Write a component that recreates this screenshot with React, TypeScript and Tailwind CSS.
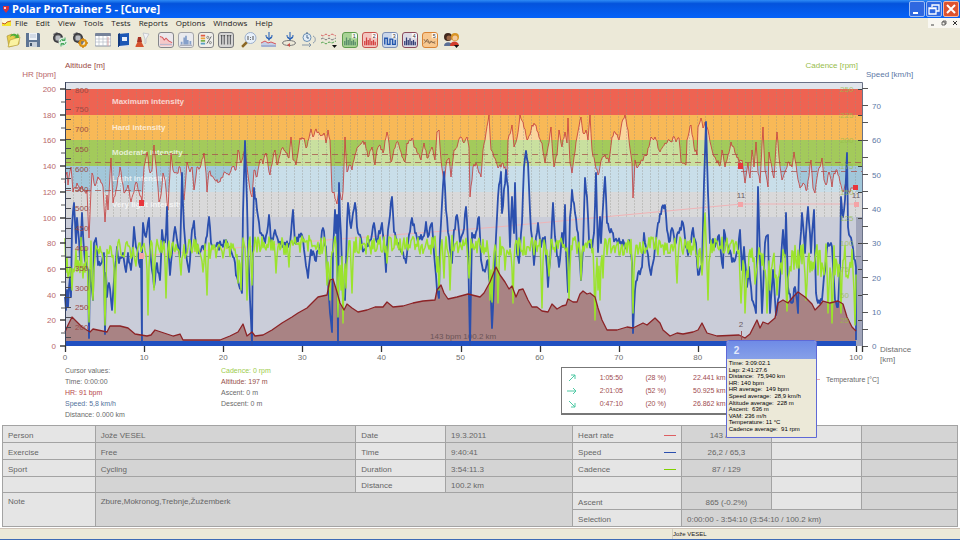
import type { ReactNode } from 'react'
import { clsx } from 'clsx'

type Point = [number, number]

const MENU = ['File', 'Edit', 'View', 'Tools', 'Tests', 'Reports', 'Options', 'Windows', 'Help']

// Recorded curves, as x y pairs in chart units
const HEART_RATE =
  '65 183 67 172 68 185 71 167 73 192 75 188 77 183 80 190 82 186 85 192 87 190 89 238 91 190 92 173 95 186 98 177 101 183 103 187 105 222 107 195 108 210 111 158 113 203 115 196 117 186 120 167 124 193 126 190 128 185 131 202 134 192 136 182 139 192 142 202 144 167 147 152 150 173 152 170 154 145 157 177 159 202 161 195 163 173 165 180 167 202 168 210 171 153 173 170 177 173 180 167 182 180 184 200 187 162 190 172 192 167 194 190 197 167 200 168 204 153 206 173 207 192 209 172 213 177 220 182 225 172 230 173 233 167 236 170 238 150 241 163 243 157 245 150 247 167 250 190 252 197 254 170 257 177 260 160 263 164 266 153 268 165 270 175 273 158 275 150 277 165 280 155 282 148 287 153 289 158 291 137 293 160 296 165 298 153 300 138 304 138 306 148 309 138 311 129 313 137 315 131 318 132 321 136 324 133 326 143 328 130 330 140 332 192 334 192 337 204 339 190 342 200 343 192 345 137 347 172 350 165 352 170 355 155 358 147 361 144 365 142 368 157 372 147 375 165 377 150 380 145 383 153 387 132 389 143 391 162 395 148 398 142 402 157 405 162 407 143 412 138 415 148 421 160 424 143 427 158 432 147 435 160 437 132 439 130 441 160 443 175 444 182 447 160 449 158 451 177 454 150 458 143 461 137 463 142 467 137 469 147 470 197 472 180 473 167 477 165 479 173 481 177 483 150 486 133 489 115 491 150 495 158 498 168 503 163 507 175 508 140 512 125 514 147 517 138 520 115 523 122 527 140 530 135 532 125 535 125 538 132 542 143 545 163 548 147 551 127 553 157 554 167 557 155 559 130 562 147 565 132 567 143 568 118 570 163 572 173 575 152 577 137 581 117 583 133 586 130 588 140 590 115 592 150 595 163 598 175 602 158 605 155 609 162 612 137 615 132 619 140 622 122 625 115 628 130 632 163 633 198 635 160 637 168 642 160 647 155 651 137 655 137 660 152 665 143 668 140 672 142 673 137 676 142 679 138 681 162 686 165 687 140 691 125 694 147 697 155 698 127 701 118 703 128 705 122 708 130 712 150 715 157 720 166 722 150 725 167 728 155 731 142 735 153 739 162 742 160 745 183 748 163 750 178 752 150 754 167 756 142 758 173 760 183 763 127 765 170 768 187 769 152 772 168 774 178 777 132 779 157 782 180 785 172 789 162 792 167 794 152 797 173 800 188 803 183 807 190 811 160 813 188 815 193 818 172 822 158 824 180 826 185 829 172 832 187 834 173 837 170 840 182 843 192 846 182 849 192 853 188 856 188'

const SPEED =
  '65 297 66 310 67 290 68 307 70 277 71 297 72 227 74 203 76 243 77 218 79 240 80 260 82 213 84 250 86 263 88 270 89 338 90 270 92 290 93 300 94 243 96 238 98 265 102 262 104 253 105 334 106 273 107 297 109 283 111 300 112 310 114 280 117 247 119 263 123 253 126 272 128 253 131 270 134 227 136 247 140 267 141 255 142 345 142 253 143 223 146 237 149 218 150 247 152 270 154 287 157 263 160 280 162 230 164 243 166 233 167 207 168 250 170 275 172 253 175 227 177 240 180 257 182 173 184 227 186 253 189 272 192 230 194 221 196 243 200 253 205 247 209 217 211 243 215 247 222 245 226 240 230 247 233 257 237 277 242 293 243 213 245 141 247 203 248 247 250 300 251 320 252 345 253 230 254 188 257 210 260 233 265 243 269 215 271 243 275 230 278 240 283 247 290 243 293 210 295 243 302 235 305 257 308 278 311 250 315 260 320 247 323 228 326 247 327 273 330 313 332 332 333 250 335 210 336 233 337 215 338 344 339 183 340 217 341 235 343 300 345 300 347 223 348 203 351 228 355 203 358 233 364 250 370 240 374 223 377 242 382 223 384 242 386 272 388 230 392 197 394 232 398 243 402 253 406 263 408 243 412 218 415 233 418 242 423 237 426 222 428 237 432 223 434 253 437 290 439 298 440 240 444 172 446 210 449 237 452 263 454 230 457 215 460 243 463 233 466 207 468 243 470 345 472 233 475 238 479 217 481 260 484 270 488 260 491 300 492 328 494 283 497 217 498 197 501 172 502 213 506 170 508 187 510 247 512 197 514 233 515 183 517 253 519 263 522 223 524 167 526 151 528 163 531 230 534 265 536 237 538 223 541 247 545 237 548 287 551 247 553 203 555 237 559 267 562 233 563 247 565 205 566 250 568 292 570 217 572 190 575 213 578 233 581 280 583 247 585 178 587 197 589 240 592 250 594 233 596 173 598 252 600 217 601 243 603 207 605 177 607 223 612 232 615 240 620 243 627 245 629 240 632 263 633 333 635 290 638 273 642 267 644 233 647 250 651 275 655 247 658 223 662 207 665 205 667 230 669 242 672 228 675 245 679 233 683 223 686 247 688 255 693 228 696 243 698 275 702 267 704 183 706 122 708 193 710 243 717 243 719 235 723 268 724 230 728 247 732 262 738 253 740 230 742 270 744 247 747 287 749 267 752 300 756 313 758 187 760 257 762 313 765 243 768 235 770 313 773 270 776 315 779 297 783 230 785 257 786 213 788 287 792 303 795 287 798 313 799 267 802 213 805 253 808 207 811 253 814 210 816 293 818 303 822 300 825 270 828 243 832 247 835 300 838 307 840 267 841 197 843 217 845 200 847 153 848 227 852 243 856 267 856 340'

const ALTITUDE =
  '65 332 68 325 72 317 77 322 82 327 90 332 93 329 107 332 110 326 120 326 128 328 135 334 147 336 151 335 155 330 167 334 173 336 180 334 183 340 220 340 230 336 238 332 243 324 247 336 252 332 255 336 263 335 272 330 282 323 292 317 298 313 307 308 312 303 318 297 327 295 330 280 333 279 337 292 340 303 344 310 347 304 352 308 358 312 367 310 375 307 383 307 387 302 393 307 403 306 413 303 423 301 435 300 437 290 441 285 444 293 448 299 457 297 468 294 480 297 484 293 490 282 496 267 500 275 505 282 509 289 512 286 516 297 519 290 523 289 528 300 532 307 537 307 542 311 548 312 552 304 557 309 562 306 566 305 568 299 573 302 577 302 580 294 583 291 587 294 590 293 595 297 598 308 602 320 607 330 617 330 627 327 633 328 643 323 647 325 655 318 660 323 663 330 670 336 677 333 683 334 693 332 698 330 702 323 707 333 717 336 739 335 745 338 750 334 757 320 760 328 763 322 768 324 775 318 778 303 783 300 788 303 793 297 798 292 805 297 812 304 815 310 820 305 823 301 830 303 838 301 843 304 847 317 852 327 856 331'

// Stops in pedalling (and the one sprint), laid over the steady cadence
const CADENCE_DIPS: Point[] = [
  [68, 278], [72, 290], [83, 278], [89, 322], [93, 300], [105, 325], [115, 313], [136, 266], [148, 315], [154, 290], [166, 298],
  [181, 275], [203, 272], [207, 295], [238, 283], [241, 290], [247, 300], [252, 285], [276, 273], [289, 267], [327, 285],
  [330, 300], [338, 317], [341, 290], [343, 323], [346, 288], [352, 293], [387, 263], [437, 272], [439, 290], [444, 278],
  [450, 290], [469, 278], [490, 300], [492, 302], [498, 303], [505, 270], [513, 303], [542, 308], [549, 276], [569, 300],
  [581, 280], [595, 320], [598, 290], [600, 300], [603, 278], [633, 313], [677, 283], [698, 268], [702, 275], [705, 213],
  [708, 300], [741, 303], [745, 313], [755, 284], [767, 313], [770, 290], [777, 295], [787, 311], [806, 300], [828, 313],
  [832, 323], [841, 313], [848, 278], [855, 325],
]

const BANDS = [
  { y: 82, h: 7, color: '#e0e4eb', label: '' },
  { y: 89, h: 26, color: '#ee6352', label: 'Maximum intensity' },
  { y: 115, h: 25, color: '#f8b957', label: 'Hard intensity' },
  { y: 140, h: 26, color: '#a3ca5b', label: 'Moderate intensity' },
  { y: 166, h: 26, color: '#a2c7da', label: 'Light intensity' },
  { y: 192, h: 25, color: '#d9d9da', label: 'Very light intensity' },
  { y: 217, h: 124, color: '#cacdd9', label: '' },
]

const parse = (data: string): Point[] => {
  const n = data.split(' ').map(Number)
  return Array.from({ length: n.length / 2 }, (_, i) => [n[i * 2], n[i * 2 + 1]] as Point)
}

const toPath = (points: Point[]) => 'M' + points.map(([x, y]) => `${x} ${y.toFixed(1)}`).join('L')

const random = (seed: number) => () => {
  seed = (seed * 16807) % 2147483647
  return seed / 2147483647 - 0.5
}

// Sensor noise between the recorded points
const roughen = (points: Point[], amount: number, seed: number): Point[] => {
  const next = random(seed)
  return points.flatMap(([x, y], i) => {
    const following = points[i + 1]
    if (!following || following[0] - x < 2) return [[x, y] as Point]
    const steps = Math.floor(following[0] - x)
    return Array.from({ length: steps }, (_, s) => {
      const t = s / steps
      const noise = s === 0 ? 0 : next() * amount
      return [x + s, y + (following[1] - y) * t + noise] as Point
    })
  })
}

const cadencePoints = (): Point[] => {
  const next = random(4242)
  const points: Point[] = []
  for (let x = 65; x <= 856; x++) {
    const dip = CADENCE_DIPS.find((d) => d[0] === x)
    const nearby = CADENCE_DIPS.find((d) => Math.abs(d[0] - x) === 1)
    const base = x < 100 ? 255 : x < 240 ? 249 : x < 500 ? 245 : x < 740 ? 246 : 261
    const spread = x < 100 || x > 740 ? 36 : 19
    let y = base + next() * spread
    if (nearby) y += (nearby[1] - y) * 0.35
    points.push([x, dip ? dip[1] : y])
  }
  return points
}

const hr = roughen(parse(HEART_RATE), 5, 77)
const speed = roughen(parse(SPEED), 9, 191)
const altitude = parse(ALTITUDE)
const cadence = cadencePoints()

const range = (count: number) => Array.from({ length: count }, (_, i) => i)

function CurveChart() {
  return (
    <svg viewBox="0 50 960 315" className="block w-full font-['Liberation_Sans',sans-serif] text-[8px]" role="img" aria-label="Exercise curve">
      {BANDS.slice(0, 5).map((b) => (
        <rect key={b.y} x="65" y={b.y} width="797" height={b.h} fill={b.color} />
      ))}
      <path d={`${toPath(hr)}V200H65Z`} fill="#fff" opacity=".42" />
      {BANDS.slice(5).map((b) => (
        <rect key={b.y} x="65" y={b.y} width="797" height={b.h} fill={b.color} />
      ))}
      <rect x="856" y="217" width="6" height="129" fill="#a1a5ba" />
      {range(100).map((i) => (
        <path key={i} d={`M${Math.round(73 + i * 7.9)}.5 89V217`} stroke="#8f8f88" strokeDasharray="2 1" opacity=".34" />
      ))}

      <g fill="#fff" fontWeight="bold">
        {BANDS.filter((b) => b.label).map((b) => (
          <text key={b.y} x="112" y={b.y + 15} opacity=".72">{b.label}</text>
        ))}
      </g>

      {/* altitude area */}
      <path d={`${toPath(altitude)}V342H65Z`} fill="#a98384" />
      <text x="430" y="339" fill="#6b5557">143 bpm 100.2 km</text>

      {/* averages */}
      <g strokeDasharray="6 4" opacity=".75">
        <path d="M65 190.5H142M142 154.5H741M65 162.5H862M741 171.5H862" stroke="#a8504a" />
        <path d="M65 256.5H862" stroke="#66758a" />
      </g>
      <path d="M142 256L327 240L497 227L741 204H856" fill="none" stroke="#efb3b6" />

      <rect x="65" y="341" width="791" height="5" fill="#2150c0" />
      <path d={toPath(hr)} fill="none" stroke="#c53c3a" strokeWidth=".9" opacity=".9" />
      <path d={toPath(speed)} fill="none" stroke="#2b4fae" strokeWidth="1.8" strokeLinejoin="round" />
      <path d={toPath(cadence)} fill="none" stroke="#9be32c" strokeWidth="1.5" strokeLinejoin="round" />
      <path d={toPath(altitude)} fill="none" stroke="#8c2326" strokeWidth="1.3" strokeLinejoin="round" />

      <path d="M139 200h5v6h-5zM738 163h5v6h-5zM853 185h5v5h-5z" fill="#e8363c" />
      <path d="M139 253h5v6h-5zM738 202h5v5h-5zM854 202h5v5h-5z" fill="#f5a3a6" />
      <g fill="#6a5a62" textAnchor="middle">
        <text x="741" y="198">11</text>
        <text x="856" y="198">11</text>
        <text x="741" y="327">2</text>
      </g>
      <path d="M741.5 331v10" stroke="#a05055" />

      <path d="M65 82.5H862.5V346" fill="none" stroke="#6a7287" />
      <path d="M65.5 82V346" stroke="#39435c" />

      {/* heart rate axis */}
      <g textAnchor="end" fill="#b9686b">
        <text x="56" y="77">HR [bpm]</text>
        {range(11).map((i) => (
          <text key={i} x="56" y={92 + i * 25.7}>{200 - i * 20}</text>
        ))}
      </g>
      {range(11).map((i) => (
        <path key={i} d={`M60 ${Math.round(89 + i * 25.7)}h6`} stroke="#333" strokeWidth="1.4" />
      ))}
      {range(10).map((i) => (
        <path key={i} d={`M61 ${Math.round(102 + i * 25.7)}h4`} stroke="#555" />
      ))}

      {/* altitude axis */}
      <g fill="#9a4a44">
        <text x="65" y="68">Altitude [m]</text>
        {range(13).map((i) => (
          <text key={i} x="75" y={92.5 + i * 19.8}>{800 - i * 50}</text>
        ))}
      </g>
      {range(26).map((i) => (
        <path key={i} d={`M66 ${Math.round(89 + i * 9.9)}.5h5`} stroke="#4a4a50" />
      ))}

      {/* cadence axis */}
      <g fill="#98bd4a">
        <text x="858" y="68" textAnchor="end">Cadence [rpm]</text>
        {range(10).map((i) => (
          <text key={i} x="840" y={92 + i * 25.7} opacity=".75">{250 - i * 25}</text>
        ))}
      </g>
      {range(10).map((i) => (
        <path key={i} d={`M858 ${Math.round(89 + i * 25.7)}.5h4`} stroke="#444" />
      ))}

      {/* speed axis */}
      <g fill="#5c77a5">
        <text x="866" y="77">Speed [km/h]</text>
        {range(8).map((i) => (
          <text key={i} x="872" y={109 + i * 34.3}>{70 - i * 10}</text>
        ))}
      </g>
      {range(16).map((i) => (
        <path key={i} d={`M862 ${Math.round(88 + i * 17.2)}.5h6`} stroke="#555" />
      ))}

      {/* distance axis */}
      <g fill="#6f6f6f">
        {range(11).map((i) => (
          <text key={i} x={65 + i * 79.1} y="360" textAnchor="middle">{i * 10}</text>
        ))}
        <text x="880" y="352">Distance</text>
        <text x="880" y="362">[km]</text>
      </g>
      {range(11).map((i) => (
        <path key={i} d={`M${Math.round(65 + i * 79.1)}.5 346v6`} stroke="#333" strokeWidth="1.3" />
      ))}
      <path d="M862.5 346v6" stroke="#333" strokeWidth="1.3" />
    </svg>
  )
}

function Tool({ label, frame, children }: { label: string; frame?: string; children: ReactNode }) {
  return (
    <button type="button" aria-label={label} className={clsx('size-4 shrink-0 overflow-hidden rounded-[3px]', frame)}>
      <svg viewBox="0 0 16 16" className="block size-full" fill="none">{children}</svg>
    </button>
  )
}

function Watch({ children }: { children: ReactNode }) {
  return (
    <>
      <path d="M1 2l4-2 8 8-3 5-3-1z" fill="#77777b" />
      <circle cx="6" cy="6" r="5" fill="#3b3b3f" />
      <circle cx="6" cy="6" r="3" fill="#b9bcc2" stroke="#77797d" />
      {children}
    </>
  )
}

function NumberedTool({ n, frame, color }: { n: number; frame: string; color: string }) {
  return (
    <Tool label={`View ${n}`} frame={frame}>
      {n === 5 ? (
        <path d="M1 7l2 3 2-3 2 4 2-2 2 2 3-1M1 12l3-3 3 3 3-2 4 2" stroke={color} />
      ) : n === 3 ? (
        <path d="M2 13V6h3v7h3V7h3v6h3V8" stroke={color} strokeWidth="1.6" />
      ) : (
        <path d="M2 14V9M4 14V5M6 14V8M8 14V6M10 14V9M12 14V8M14 14V10" stroke={color} strokeWidth="1.4" />
      )}
      <rect x="10" width="6" height="6" fill="#fff" opacity=".85" />
      <text x="11" y="6" fontSize="6" fill="#333" fontFamily="Liberation Sans, sans-serif">{n}</text>
    </Tool>
  )
}

function Toolbar() {
  return (
    <div className="flex h-[22px] items-center bg-[#ece9d8] pt-px pl-[5px]" role="toolbar" aria-label="Main">
      <div className="flex gap-1">
        <Tool label="Open">
          <path d="M2 4l5-2 1 2 6-1v9L4 15z" fill="#e8cf4e" stroke="#a58c2b" strokeWidth=".6" />
          <path d="M5 8l10-3-2 8-10 2z" fill="#fbf3a0" stroke="#b59a34" strokeWidth=".6" />
          <path d="M5 5c1-4 5-4 7-2l1-2 1 5h-5l2-1c-2-2-4-2-6 0z" fill="#4eae3a" />
        </Tool>
        <Tool label="Save">
          <path d="M1 1h13l1 1v13H1z" fill="#5e7594" />
          <path d="M4 1h8v7H4z" fill="#eef2f7" />
          <path d="M5 3h6M5 5h6" stroke="#9db0c6" strokeWidth=".7" />
          <path d="M4 10h8v5H4z" fill="#c7d0db" />
          <path d="M5 11h2v3H5z" fill="#43566f" />
        </Tool>
      </div>
      <div className="ml-[11px] flex gap-1">
        <Tool label="Transfer data from watch">
          <Watch>
            <circle cx="11" cy="10" r="4.5" fill="#e1f0e3" />
            <path d="M8 10a3 3 0 015-2M14 10a3 3 0 01-5 2M13 5.500v3h-3M9 14.500v-3h3" stroke="#48a85c" />
          </Watch>
        </Tool>
        <Tool label="Watch settings">
          <Watch>
            <circle cx="11" cy="11" r="3.200" stroke="#e39a17" strokeWidth="2.200" />
            <path d="M11 6v2M11 14v2M6 11h2M14 11h2M8 8l1 1M13 13l1 1M14 8l-1 1M9 13l-1 1" stroke="#cf8412" strokeWidth="1.400" />
          </Watch>
        </Tool>
      </div>
      <div className="ml-[7px] flex gap-1">
        <Tool label="Diary">
          <path d="M0 2h16v12H0z" fill="#fff" stroke="#8b95a5" />
          <path d="M0 1h16v3H0z" fill="#77839a" />
          <path d="M0 7h16M0 10h16M4 4v10M8 4v10M12 4v10" stroke="#b5bbc6" strokeWidth=".7" />
          <path d="M13 5v9" stroke="#dda5a5" />
        </Tool>
        <Tool label="Log book">
          <path d="M3 2l11-1v13l-11 1z" fill="#1d58b5" />
          <path d="M3 2l2-1v13l-2 1z" fill="#12397d" />
          <path d="M7 5h5v4H7z" fill="#e9eff9" />
          <path d="M4 14l10-1v1.500L4 16z" fill="#e8e8e8" />
        </Tool>
        <Tool label="Fitness test">
          <path d="M8 1l6 1-3 5v4l-1 1v-5z" fill="#f2f3f5" stroke="#b8bcc4" strokeWidth=".7" />
          <path d="M3 5h3v4l3 6H0l3-6z" fill="#d6542f" />
          <path d="M3 5h3l1 5H2z" fill="#a83426" />
        </Tool>
      </div>

      {/* curve display options */}
      <div className="ml-[7px] flex gap-1">
        <Tool label="Curve" frame="border border-[#85868a] bg-[#ebe8ec]">
          <path d="M1 4l3 1 2 3 2-2 3 3 4 2v4H1z" fill="#f4c9c9" />
          <path d="M1 4l3 1 2 3 2-2 3 3 4 2" stroke="#d6585c" strokeWidth="1.200" />
          <path d="M1 13h14" stroke="#a9b4ce" />
        </Tool>
        <Tool label="Distribution" frame="border border-[#a4a5a9] bg-[#e9eaee]">
          <path d="M3 13v-3M6 13V5M8 13V3M10 13V8M13 13V9" stroke="#86a0ca" strokeWidth="2" />
          <path d="M1 14h14" stroke="#8b90a0" />
        </Tool>
        <Tool label="Zones" frame="border border-[#85868a] bg-[#efeeea]">
          <path d="M2 3h5" stroke="#df5b43" strokeWidth="2" />
          <path d="M2 6h5" stroke="#e8a33c" strokeWidth="2" />
          <path d="M2 9h5" stroke="#79b14c" strokeWidth="2" />
          <path d="M2 12h5" stroke="#5aa0c4" strokeWidth="2" />
          <path d="M14 4l-5 8" stroke="#555" />
          <circle cx="10" cy="5" r="1.200" stroke="#666" strokeWidth=".8" />
          <circle cx="13" cy="11" r="1.200" stroke="#666" strokeWidth=".8" />
        </Tool>
        <Tool label="Laps" frame="border border-[#77787c] bg-[#d6d5d4]">
          <path d="M3 3v10M6 3v10M10 3v10M13 3v10" stroke="#5f6064" strokeWidth="1.300" />
          <path d="M2 3h2M5 3h2M9 3h2M12 3h2" stroke="#333" />
        </Tool>
      </div>
      <div className="ml-[7px] flex gap-1">
        <Tool label="Zoom out">
          <path d="M6 10l-5 5" stroke="#8b6725" strokeWidth="2.500" />
          <circle cx="9.500" cy="6" r="5.500" fill="#e7f0fa" stroke="#9baecb" />
          <path d="M7 4v4M12 4v4M9.500 5v.8M9.500 7v.8" stroke="#555" />
        </Tool>
        <Tool label="Select on curve">
          <path d="M8 0v7M5 3c0 5 6 5 6 0M6 5l2 3 2-3" stroke="#2c64b8" strokeWidth="1.100" />
          <path d="M0 11l4-2 3 2 3-1 5 2v3H0z" fill="#c4cfe8" />
          <path d="M0 11l4-2 3 2 3-1 5 2" stroke="#d8545a" />
          <path d="M0 14h15" stroke="#7f90bd" />
        </Tool>
        <Tool label="Add lap">
          <path d="M9 0v7M6 3c0 5 6 5 6 0M7 5l2 3 2-3" stroke="#2c64b8" strokeWidth="1.100" />
          <ellipse cx="8" cy="11" rx="6.500" ry="2.500" stroke="#777" />
          <path d="M6 13l3-2v4z" fill="#c9544c" />
        </Tool>
        <Tool label="Time or distance">
          <circle cx="6" cy="5.500" r="4" fill="#e4eef7" stroke="#6b8fb3" />
          <path d="M6 3v3h2M5 1h2" stroke="#46698f" />
          <path d="M12 4c3 1 3 6 0 7M1 13h9M8 11l2 2-2 2" stroke="#8496a8" />
        </Tool>
        <Tool label="Curve selection">
          <path d="M0 3l2 1 3-2 3 2 3-2 4 2" stroke="#d76565" strokeDasharray="3 1" />
          <path d="M0 7l2-1 3 2 3-2 3 2 4-2" stroke="#777a80" strokeDasharray="3 1" />
          <path d="M0 11l2-1 3 2 3-2 3 1 4-2" stroke="#55a552" strokeDasharray="3 1" />
          <path d="M11 13h5l-2.500 3z" fill="#111" />
        </Tool>
      </div>
      <div className="ml-[5px] flex gap-1">
        <NumberedTool n={1} frame="border border-[#5e9b4d] bg-[#a7d394]" color="#568c6a" />
        <NumberedTool n={2} frame="border border-[#c9524d] bg-[#f3c5bf]" color="#d33e3e" />
        <NumberedTool n={3} frame="border border-[#7a8eb5] bg-[#c9d6ea]" color="#2256ad" />
        <NumberedTool n={4} frame="border border-[#8b4a5c] bg-[#dcdae4]" color="#303c74" />
        <NumberedTool n={5} frame="border border-[#d98334] bg-[#f8c88f]" color="#8a6a4a" />
      </div>
      <div className="ml-[6px] flex">
        <Tool label="Persons">
          <path d="M0 14c0-5 8-5 9 0z" fill="#5b6f95" />
          <path d="M6 14c0-6 9-6 9 0z" fill="#d13d2c" />
          <circle cx="4" cy="5" r="4" fill="#42291d" />
          <circle cx="5" cy="6" r="2.500" fill="#9c6746" />
          <circle cx="11" cy="5" r="4" fill="#d99526" />
          <circle cx="11" cy="6" r="2.500" fill="#f4c99a" />
          <path d="M10 13h5l-2.500 3z" fill="#111" />
        </Tool>
      </div>
    </div>
  )
}

function TitleBar() {
  return (
    <header className="flex h-[18px] items-center bg-linear-to-b from-[#2f8bf5] via-[#0453dc] via-20% to-[#0562f8] pr-px pl-[3px]">
      <svg viewBox="0 0 6 8" className="h-2 w-[6px]">
        <path d="M0 1h6v3L3 8 0 4z" fill="#d5303c" />
        <path d="M1 2h2v2H1z" fill="#f4c9cd" />
      </svg>
      <h1 className="ml-[3px] font-['Open_Sans',sans-serif] text-[11px] leading-[18px] font-bold text-white">Polar ProTrainer 5 - [Curve]</h1>
      <div className="ml-auto flex gap-px">
        <button type="button" aria-label="Minimize" className="size-4 rounded-[2px] border border-[#9dbcf3] bg-[#2f68e0]">
          <svg viewBox="0 0 14 14"><path d="M3 11h5" stroke="#fff" strokeWidth="2" /></svg>
        </button>
        <button type="button" aria-label="Restore" className="size-4 rounded-[2px] border border-[#9dbcf3] bg-[#2f68e0]">
          <svg viewBox="0 0 14 14" fill="none" stroke="#fff"><path d="M5 5V3h7v6H9M2 6h7v6H2zM5 3h7M2 6.500h7" strokeWidth="1.300" /></svg>
        </button>
        <button type="button" aria-label="Close" className="size-4 rounded-[2px] border border-[#f0b9a8] bg-[#dd5330]">
          <svg viewBox="0 0 14 14"><path d="M3 3l8 8M11 3l-8 8" stroke="#fff" strokeWidth="2" /></svg>
        </button>
      </div>
    </header>
  )
}

function MenuBar() {
  return (
    <nav className="flex h-[10px] items-center bg-[#ece9d8] pl-[2px] font-['Open_Sans',sans-serif] text-[8px] leading-[10px] text-[#222]">
      <svg viewBox="0 0 9 8" className="h-2 w-[9px]">
        <path d="M0 1h9v6H0z" fill="#f4e52e" />
        <path d="M0 4l3 1 2-2 4-1V0H0z" fill="#fdf9d8" />
        <path d="M0 4l3 1 2-2 4-1" fill="none" stroke="#c75b28" />
      </svg>
      <div className="ml-1 flex gap-2">
        {MENU.map((item) => (
          <button key={item} type="button">{item}</button>
        ))}
      </div>
      <div className="ml-auto flex h-full w-8 items-center justify-around bg-[#f8f7f1]">
        <button type="button" aria-label="Minimize document">
          <svg viewBox="0 0 6 6" className="size-[6px]"><path d="M1 5h3" stroke="#444" /></svg>
        </button>
        <button type="button" aria-label="Restore document">
          <svg viewBox="0 0 6 6" className="size-[6px]" fill="none" stroke="#444" strokeWidth=".8"><path d="M2 2V1h3v3H4M1 2h3v3H1z" /></svg>
        </button>
        <button type="button" aria-label="Close document">
          <svg viewBox="0 0 6 6" className="size-[6px]"><path d="M1 1l4 4M5 1L1 5" stroke="#333" /></svg>
        </button>
      </div>
    </nav>
  )
}

const SLOPES = [
  { name: 'Uphill', arrow: 'M2 8l6-6M4 2h4v4', time: '1:05:50', share: '(28 %)', distance: '22.441 km' },
  { name: 'Flat', arrow: 'M0 5h9M6 2l3 3-3 3', time: '2:01:05', share: '(52 %)', distance: '50.925 km' },
  { name: 'Downhill', arrow: 'M2 2l6 6M8 4v4H4', time: '0:47:10', share: '(20 %)', distance: '26.862 km' },
]

function Readouts() {
  return (
    <section className="flex h-[60px] items-start pl-[65px] text-[7px] leading-[11px] text-[#6a6a6a]">
      <div className="w-[156px]">
        <p>Cursor values:</p>
        <p>Time: 0:00:00</p>
        <p className="text-[#b8484a]">HR: 91 bpm</p>
        <p className="text-[#54729c]">Speed: 5,8 km/h</p>
        <p>Distance: 0.000 km</p>
      </div>
      <div className="w-[340px]">
        <p className="text-[#9ccc4c]">Cadence: 0 rpm</p>
        <p className="text-[#96504a]">Altitude: 197 m</p>
        <p>Ascent: 0 m</p>
        <p>Descent: 0 m</p>
      </div>
      <div className="mt-[2px] w-[200px] border border-r-2 border-b-2 border-[#777] py-[3px] text-[#a04c50]">
        <table className="w-full table-fixed">
          <colgroup>
            <col className="w-[20px]" />
            <col className="w-[41px]" />
            <col className="w-[43px]" />
            <col />
          </colgroup>
          <tbody>
            {SLOPES.map((s) => (
              <tr key={s.name} className="h-[13px]">
                <td className="pl-[5px]">
                  <svg viewBox="0 0 10 10" className="size-[10px]" role="img" aria-label={s.name}>
                    <path d={s.arrow} fill="none" stroke="#4fc9a4" />
                  </svg>
                </td>
                <td className="text-right">{s.time}</td>
                <td className="text-right">{s.share}</td>
                <td className="pl-[27px]">{s.distance}</td>
              </tr>
            ))}
          </tbody>
        </table>
      </div>
      <div className="ml-[53px] flex items-center gap-[6px] pt-[9px]">
        <span className="h-px w-[6px] bg-[#e9a9ac]" />
        Temperature [°C]
      </div>
    </section>
  )
}

const LAP = [
  'Time: 3:09:02.1',
  'Lap: 2:41:27.6',
  'Distance:  75,940 km',
  'HR: 140 bpm',
  'HR average:  149 bpm',
  'Speed average:  28,9 km/h',
  'Altitude average:  228 m',
  'Ascent:  636 m',
  'VAM: 236 m/h',
  'Temperature: 11 °C',
  'Cadence average:  91 rpm',
]

function LapTooltip() {
  return (
    <div role="tooltip" className="absolute top-[290px] left-[75.6%] w-[91px] overflow-hidden rounded-t-[3px] border border-[#5f69d6] bg-[#ece9d8]">
      <h2 className="h-[18px] bg-linear-to-b from-[#6f8be6] to-[#86a0e8] pl-[7px] text-[10px] leading-[20px] font-bold text-white/80">2</h2>
      <ul className="flex h-[78px] flex-col justify-between pt-px pb-[5px] pl-[2px] text-[6px] leading-[6px] whitespace-pre text-black">
        {LAP.map((line) => (
          <li key={line}>{line}</li>
        ))}
      </ul>
    </div>
  )
}

function Label({ children, line, rowSpan }: { children?: ReactNode; line?: string; rowSpan?: number }) {
  return (
    <th scope="row" rowSpan={rowSpan} className={clsx('border border-[#a3a3a3] bg-[#e5e5e5] px-[5px] pt-[3px] text-left font-normal', rowSpan && 'align-top')}>
      <span className="flex items-center justify-between">
        {children}
        {line && <span className={clsx('h-px w-3', line)} />}
      </span>
    </th>
  )
}

function Value({ children, center, span, rowSpan, light }: { children?: ReactNode; center?: boolean; span?: number; rowSpan?: number; light?: boolean }) {
  return (
    <td
      colSpan={span}
      rowSpan={rowSpan}
      className={clsx('border border-[#a3a3a3] px-[5px] pt-[3px]', light ? 'bg-[#e5e5e5]' : 'bg-[#d4d4d4]', center && 'text-center', rowSpan && 'align-top')}
    >
      {children}
    </td>
  )
}

function Summary() {
  return (
    <table className="mx-[2px] w-[calc(100%-4px)] table-fixed border-collapse border border-[#7b7b7b] text-[8px] leading-[12px] text-[#666]">
      <colgroup>
        <col className="w-[9.7%]" />
        <col className="w-[27.3%]" />
        <col className="w-[9.4%]" />
        <col className="w-[13.3%]" />
        <col className="w-[11.4%]" />
        <col className="w-[9.4%]" />
        <col className="w-[9.5%]" />
        <col className="w-[10%]" />
      </colgroup>
      <tbody>
        <tr className="h-[17px]">
          <Label>Person</Label>
          <Value>Jože VESEL</Value>
          <Label>Date</Label>
          <Value>19.3.2011</Value>
          <Label line="bg-[#dd5f62]">Heart rate</Label>
          <Value center>143 / 182</Value>
          <Value light />
          <Value />
        </tr>
        <tr className="h-[17px]">
          <Label>Exercise</Label>
          <Value>Free</Value>
          <Label>Time</Label>
          <Value>9:40:41</Value>
          <Label line="bg-[#2b4fae]">Speed</Label>
          <Value center>26,2 / 65,3</Value>
          <Value light />
          <Value />
        </tr>
        <tr className="h-[17px]">
          <Label>Sport</Label>
          <Value>Cycling</Value>
          <Label>Duration</Label>
          <Value>3:54:11.3</Value>
          <Label line="bg-[#80d000]">Cadence</Label>
          <Value center>87 / 129</Value>
          <Value light />
          <Value />
        </tr>
        <tr className="h-[16px]">
          <Label />
          <Value />
          <Label>Distance</Label>
          <Value>100.2 km</Value>
          <Label />
          <Value />
          <Value light />
          <Value />
        </tr>
        <tr className="h-[17px]">
          <Label rowSpan={2}>Note</Label>
          <Value span={3} rowSpan={2}>Zbure,Mokronog,Trebnje,Žužemberk</Value>
          <Label>Ascent</Label>
          <Value center>865 (-0.2%)</Value>
          <Value light />
          <Value />
        </tr>
        <tr className="h-[17px]">
          <Label>Selection</Label>
          <Value span={3}>0:00:00 - 3:54:10 (3:54:10 / 100.2 km)</Value>
        </tr>
      </tbody>
    </table>
  )
}

export default function App() {
  return (
    <div className="flex min-h-screen flex-col bg-white font-['Liberation_Sans',Arial,sans-serif]">
      <TitleBar />
      <MenuBar />
      <Toolbar />
      <main className="relative">
        <CurveChart />
        <Readouts />
        <Summary />
        <LapTooltip />
      </main>
      <footer className="mt-auto flex h-3 border-t border-b border-t-[#cfc3b8] border-b-[#3f6cb5] bg-[#ece9d8] text-[6px] leading-[11px] text-[#222]">
        <span className="ml-[70%] border-l border-[#d2cfbf]">Jože VESEL</span>
      </footer>
    </div>
  )
}
